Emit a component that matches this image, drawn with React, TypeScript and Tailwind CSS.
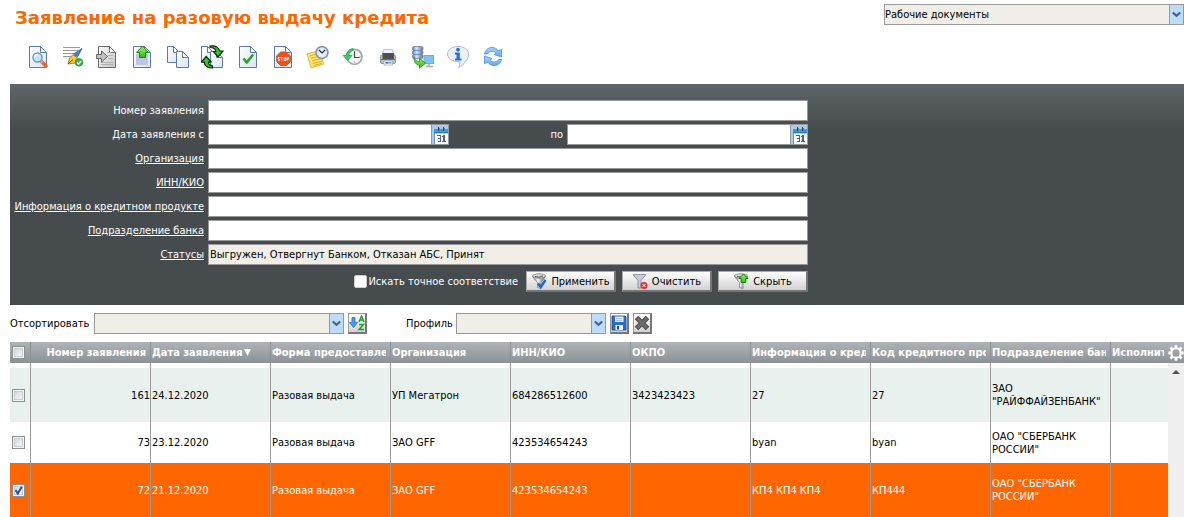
import { useState, type ReactNode } from 'react';

interface Row {
    id: string;
    date: string;
    form: string;
    org: string;
    inn: string;
    okpo: string;
    info: string;
    code: string;
    branch: string;
    height: string;
}

const ROWS: Row[] = [
    { id: '161', date: '24.12.2020', form: 'Разовая выдача', org: 'УП Мегатрон', inn: '684286512600', okpo: '3423423423', info: '27', code: '27', branch: 'ЗАО "РАЙФФАЙЗЕНБАНК"', height: 'h-[54px]' },
    { id: '73', date: '23.12.2020', form: 'Разовая выдача', org: 'ЗАО GFF', inn: '423534654243', okpo: '', info: 'byan', code: 'byan', branch: 'ОАО "СБЕРБАНК РОССИИ"', height: 'h-[41px]' },
    { id: '72', date: '21.12.2020', form: 'Разовая выдача', org: 'ЗАО GFF', inn: '423534654243', okpo: '', info: 'КП4 КП4 КП4', code: 'КП444', branch: 'ОАО "СБЕРБАНК РОССИИ"', height: 'h-[54px]' },
];

const COLUMNS = [
    'Форма предоставления',
    'Организация',
    'ИНН/КИО',
    'ОКПО',
    'Информация о кредитном продукте',
    'Код кредитного продукта',
    'Подразделение банка',
];

/* ---------- icons ---------- */

function Doc({ x = 3, y = 1, w = 18, h = 22, stroke = '#5d79a8', fill = 'url(#paper)' }) {
    return (
        <g stroke={stroke} strokeLinejoin="round">
            <path d={`M${x + 0.5} ${y + 0.5}h${w - 7}l6 6v${h - 7}h-${w - 1}z`} fill={fill} />
            <path d={`M${x + w - 6.5} ${y + 0.5}v6h6z`} fill="#fff" />
        </g>
    );
}

function Gradients() {
    return (
        <svg className="size-0" aria-hidden="true">
            <defs>
                <linearGradient id="paper" x1="0" y1="0" x2="1" y2="1">
                    <stop offset="0" stopColor="#ffffff" />
                    <stop offset="1" stopColor="#d6e6f6" />
                </linearGradient>
                <linearGradient id="greyPaper" x1="0" y1="0" x2="1" y2="1">
                    <stop offset="0" stopColor="#ffffff" />
                    <stop offset="1" stopColor="#c4c4c4" />
                </linearGradient>
                <linearGradient id="green" x1="0" y1="0" x2="0" y2="1">
                    <stop offset="0" stopColor="#9cf05a" />
                    <stop offset="1" stopColor="#35b81c" />
                </linearGradient>
                <linearGradient id="metal" x1="0" y1="0" x2="1" y2="0">
                    <stop offset="0" stopColor="#8b8f92" />
                    <stop offset="0.4" stopColor="#f4f4f4" />
                    <stop offset="1" stopColor="#5e6163" />
                </linearGradient>
                <linearGradient id="sky" x1="0" y1="0" x2="0" y2="1">
                    <stop offset="0" stopColor="#a9d6fb" />
                    <stop offset="1" stopColor="#5fa9ee" />
                </linearGradient>
                <linearGradient id="disc" x1="0" y1="0" x2="1" y2="0">
                    <stop offset="0" stopColor="#4f86d8" />
                    <stop offset="0.4" stopColor="#cfe2fa" />
                    <stop offset="1" stopColor="#5b6f8f" />
                </linearGradient>
                <radialGradient id="face">
                    <stop offset="0" stopColor="#ffffff" />
                    <stop offset="1" stopColor="#cfdcf0" />
                </radialGradient>
            </defs>
        </svg>
    );
}

const TOOLS: { title: string; icon: ReactNode }[] = [
    {
        title: 'Просмотр',
        icon: (
            <>
                <Doc />
                <path d="M15.500 16.500l4.500 4.500" stroke="#e8672c" strokeWidth="3.600" strokeLinecap="round" />
                <path d="M14.500 15.500l2 2" stroke="#d9b49a" strokeWidth="2.400" />
                <circle cx="11.500" cy="12.500" r="4.500" fill="#bfe8fb" stroke="#6f96c6" strokeWidth="1.400" />
                <path d="M8.800 12.500a3 3 0 013-3" stroke="#fff" strokeWidth="1.400" fill="none" />
            </>
        ),
    },
    {
        title: 'Подписать',
        icon: (
            <>
                <path d="M2 2.500h17M2 5.500h15M2 8.500h12M2 11.500h9" stroke="#9a9a9a" />
                <path d="M21 3.500l-4.500 8.500-4-3z" fill="#4c80cc" stroke="#2f579d" strokeWidth="0.800" />
                <path d="M12 9.500l4.500 3.500-2.500 5-7 1 1.500-6z" fill="#f5c945" stroke="#a67d16" strokeWidth="0.900" />
                <path d="M7 19l5-4.500" stroke="#7a5a10" />
                <circle cx="18" cy="17.300" r="3.900" fill="#35b14b" stroke="#1c8a35" strokeWidth="0.600" />
                <path d="M15.900 17.300l1.600 1.700 2.700-3" stroke="#fff" strokeWidth="1.400" fill="none" />
            </>
        ),
    },
    {
        title: 'Импорт',
        icon: (
            <>
                <Doc x={2} stroke="#6a6a6a" fill="url(#greyPaper)" />
                <path d="M11 7.500h4M12 10.500h5M12 13.500h5M5 17.500h12M5 19.500h12" stroke="#b0b0b0" />
                <path d="M0.500 9.500h5v-3.500l6 5.500-6 5.500v-3.500h-5z" fill="#c2c2c2" stroke="#666666" />
            </>
        ),
    },
    {
        title: 'Отправить',
        icon: (
            <>
                <Doc x={2} />
                <path d="M5 9h12v11H5z" fill="#bcc5e4" />
                <path d="M11.500 1l6 6.500h-3v5h-6v-5h-3z" fill="url(#green)" stroke="#0e8a12" />
            </>
        ),
    },
    {
        title: 'Копировать',
        icon: (
            <>
                <Doc x={1} y={1} w={13} h={17} />
                <Doc x={10} y={6} w={13} h={17} />
            </>
        ),
    },
    {
        title: 'Заменить',
        icon: (
            <>
                <Doc x={0} y={1} w={13} h={17} />
                <Doc x={9} y={6} w={13} h={17} />
                <path d="M9 1c6-1 9 2 9.500 5H22l-5 6-4.500-5.500H15C14.500 4 12.500 2.500 9 2.500z" fill="#3fc32b" stroke="#07300a" strokeWidth="1.200" />
                <path d="M0.500 17l4.700-5.500 5 5.500H7.500c0 2.500 1 3.500 4 3.800V23C6 23 3.500 21.500 3.300 17z" fill="#3fc32b" stroke="#07300a" strokeWidth="1.200" />
            </>
        ),
    },
    {
        title: 'Проверить',
        icon: (
            <>
                <Doc />
                <path d="M7.500 13.500l3.200 4 6.500-8" stroke="#2ea12c" strokeWidth="2.600" fill="none" />
            </>
        ),
    },
    {
        title: 'Отозвать',
        icon: (
            <>
                <Doc />
                <path d="M9.600 7h5.800l4 4v5.500l-4 4H9.600l-4-4V11z" fill="#f4501e" stroke="#d83a10" strokeWidth="0.800" />
                <path d="M8.500 12.500H7v1.400h1.400v1.500H7M9.500 12.500h2.500M10.800 12.500v3M13 12.500h1.700v3H13zM16 15.700v-3.200h1.700v1.700H16" stroke="#fff" strokeWidth="0.900" fill="none" />
            </>
        ),
    },
    {
        title: 'Отложить',
        icon: (
            <>
                <path d="M1 9l11-3 6 13-13 4z" fill="#ffe46a" stroke="#e3b840" />
                <path d="M4 11l8-2.300M5 13.500l8-2.300M6 16l9-2.500M7 18.500l9-2.500M8 20.500l8-2.300" stroke="#d3a52c" strokeWidth="0.900" />
                <circle cx="16" cy="7.500" r="6" fill="url(#face)" stroke="#8292ae" strokeWidth="1.600" />
                <path d="M13 5l3 3 3.200-3.200" stroke="#222" strokeWidth="1.200" fill="none" />
            </>
        ),
    },
    {
        title: 'История',
        icon: (
            <>
                <circle cx="13.500" cy="11.800" r="7.500" fill="#f4f4f4" stroke="#a8a8a8" strokeWidth="1.800" />
                <path d="M13.500 6.500v6h5" stroke="#444" strokeWidth="1.200" fill="none" />
                <path d="M13.500 6v1M18.500 12h1M13.500 16.500v1" stroke="#777" />
                <path d="M12 3.500c-4 .5-6.500 3.500-6.800 7H2l4.500 5 4.500-5H8c.3-3 2-4.500 4-5z" fill="#3ccb5e" stroke="#1fa043" strokeWidth="0.700" />
            </>
        ),
    },
    {
        title: 'Печать',
        icon: (
            <>
                <path d="M7.500 4.500h9l1.500 6.500H6z" fill="#eef1f2" stroke="#b2b7b9" strokeWidth="0.800" />
                <rect x="4.500" y="10" width="15" height="8.500" rx="1.500" fill="#babdbf" stroke="#94989a" />
                <path d="M6.500 8h11.500v6H6.500z" fill="#4b5053" />
                <path d="M5 14.500h14" stroke="#6c7072" />
                <path d="M8 16h8.500v4H8z" fill="#fff" stroke="#a2a6a8" strokeWidth="0.700" />
                <path d="M9.500 17.800h3" stroke="#1a57d0" strokeWidth="1.500" />
                <path d="M13 17.800h2.500" stroke="#30a9c8" strokeWidth="1.500" />
            </>
        ),
    },
    {
        title: 'Выгрузить',
        icon: (
            <>
                <rect x="1.500" y="1.500" width="10.500" height="4" rx="1.500" fill="url(#disc)" stroke="#6c83a8" strokeWidth="0.800" />
                <rect x="1.500" y="5.500" width="10.500" height="4" rx="1.500" fill="url(#disc)" stroke="#6c83a8" strokeWidth="0.800" />
                <rect x="1.500" y="9.500" width="10.500" height="4" rx="1.500" fill="url(#disc)" stroke="#6c83a8" strokeWidth="0.800" />
                <rect x="13" y="10.500" width="9.500" height="8" fill="#7cc3f8" stroke="#9aa1a8" />
                <path d="M18 19v2M15 21.500h7" stroke="#a4aab0" strokeWidth="1.500" />
                <path d="M3 12.500c1 3 3 4 5.500 4v-3l6 4.800-6 4.700v-3C5 20 3 17 3 12.500z" fill="url(#green)" stroke="#1f8f2e" strokeWidth="0.900" />
            </>
        ),
    },
    {
        title: 'Информация',
        icon: (
            <>
                <path d="M12 1.500c6 0 10.500 3 10.500 7.500 0 4-1.500 6.500-4 8.200-1 2.800-3 4.600-6 5.300 1.300-1.700 1.500-3.500 1-5.700-7 0-12-3.300-12-7.800 0-4.500 4.500-7.500 10.500-7.500z" fill="#eeeffc" stroke="#b5b9d8" />
                <circle cx="12" cy="4.700" r="1.900" fill="#2173dc" />
                <path d="M9 7.500h4.800v6H15.500V15.500H9v-2h1.500V9.500H9z" fill="#2173dc" />
            </>
        ),
    },
    {
        title: 'Обновить',
        icon: (
            <>
                <path d="M3.500 9C4.500 4.500 7.500 2.500 11 2.500c3 0 5 1.300 6 3.300l3.500-1.300v7.500L13 9.500l2.200-1.500C13 5.300 8.500 5.500 6.500 9z" fill="url(#sky)" stroke="#4a90dc" strokeWidth="0.800" strokeLinejoin="round" />
                <path d="M20.500 14.500c-1 4.300-4 6-7.500 6-3 0-5-1.300-6-3.300L3.500 18.500V11l7.500 2.500L8.800 15c2.200 2.700 6.700 2.500 8.700-.5z" fill="url(#sky)" stroke="#4a90dc" strokeWidth="0.800" strokeLinejoin="round" />
            </>
        ),
    },
];

function Icon({ children }: { children: ReactNode }) {
    return <svg viewBox="0 0 24 24" fill="none" className="size-6" aria-hidden="true">{children}</svg>;
}

function Small({ children }: { children: ReactNode }) {
    return <svg viewBox="0 0 16 16" fill="none" className="size-4 shrink-0" aria-hidden="true">{children}</svg>;
}

function Funnel() {
    return (
        <>
            <path d="M1.500 3.500l5 6v5l3.500 1v-6l4.500-6z" fill="url(#metal)" stroke="#6a6e70" strokeWidth="0.700" />
            <ellipse cx="8" cy="3" rx="6.500" ry="2.200" fill="#d8dadb" stroke="#7b7f82" strokeWidth="0.800" />
            <path d="M4 3.500q4 1.500 8-.5" stroke="#54585a" />
        </>
    );
}

function Calendar() {
    return (
        <svg viewBox="0 0 16 19" shapeRendering="crispEdges" className="h-[19px] w-4" aria-hidden="true">
            <path d="M0 0h16v19H0z" fill="#a6cbf3" />
            <path d="M2 4h14v4H2z" fill="#3f9cc8" />
            <path d="M2 7h14v1H2z" fill="#1f7fc4" />
            <path d="M3 9h13v10H3z" fill="#fff" />
            <path d="M2 8h1v11H2z" fill="#7a8fb4" />
            <path d="M6 2h1v4H6zM11 2h1v4h-1z" fill="#4b3358" />
            <path d="M7 3h1v2H7zM12 3h1v2h-1z" fill="#5f8a78" />
            <path d="M5 10h4v7H6v-1h2v-2H6v-1h2v-2H5zM11 10h2v6h1v1h-4v-1h1v-4h-1v-1h1z" fill="#56607c" />
        </svg>
    );
}

/* ---------- controls ---------- */

function Dropdown({ label, id, value, className }: { label: string; id: string; value: string; className: string }) {
    return (
        <div className={`flex h-[21px] border border-[#999999] bg-[#f1eee7] ${className}`}>
            <select id={id} aria-label={label} className="min-w-0 flex-1 appearance-none bg-transparent outline-none">
                <option>{value}</option>
            </select>
            <span className="flex w-[14px] items-center justify-center border-l border-[#999999] bg-[#bbdcfb]">
                <svg viewBox="0 0 9 7" className="h-[7px] w-[9px]" fill="none" aria-hidden="true">
                    <path d="M0.800 1.500l3.700 3.300 3.700-3.300" stroke="#44618c" strokeWidth="2.200" />
                </svg>
            </span>
        </div>
    );
}

function Check({ label, defaultChecked = false }: { label: string; defaultChecked?: boolean }) {
    return (
        <span className="grid size-[13px]">
            <input
                type="checkbox"
                aria-label={label}
                defaultChecked={defaultChecked}
                className="peer col-start-1 row-start-1 size-[13px] appearance-none border border-[#8e8f8f] bg-linear-to-br from-[#cbcfd5] to-white shadow-[inset_0_0_0_1px_#f4f4f4,inset_0_0_0_2px_#c9ccd0]"
            />
            <svg viewBox="0 0 13 13" fill="none" className="pointer-events-none invisible col-start-1 row-start-1 size-[13px] peer-checked:visible" aria-hidden="true">
                <path d="M3.500 6l2.300 3.500L9.800 2.800" stroke="#2f4f96" strokeWidth="2" />
            </svg>
        </span>
    );
}

function Field({ label, id, plain = false, value = '' }: { label: string; id: string; plain?: boolean; value?: string }) {
    return (
        <>
            <label htmlFor={id} className="text-right">
                {plain ? label : <a href="#" className="underline">{label}</a>}
            </label>
            <input
                id={id}
                defaultValue={value}
                readOnly={value !== ''}
                className="h-[21px] w-full border border-[#999999] bg-white px-px text-black outline-none read-only:bg-[#f1eee7]"
            />
        </>
    );
}

function DateInput({ id }: { id: string }) {
    return (
        <div className="flex h-[21px] w-[241px] border border-[#999999] bg-white">
            <input id={id} className="min-w-0 flex-1 px-px text-black outline-none" />
            <button type="button" aria-label="Календарь" className="w-[17px] border-l border-[#999999]"><Calendar /></button>
        </div>
    );
}

function FilterButton({ icon, children }: { icon: ReactNode; children: string }) {
    return (
        <button
            type="button"
            className="flex h-[21px] w-[90px] items-center justify-center gap-1 border border-r-2 border-b-2 border-[#aaaaaa] border-r-[#777777] border-b-[#777777] bg-linear-to-b from-white to-[#d2d2d2] text-black"
        >
            <Small>{icon}</Small>
            {children}
        </button>
    );
}

function SquareButton({ label, children }: { label: string; children: ReactNode }) {
    return (
        <button type="button" aria-label={label} className="flex h-[21px] w-[19px] items-center justify-center border border-r-2 border-b-2 border-[#999999] border-r-[#777777] border-b-[#777777] bg-linear-to-b from-white to-[#d2d2d2]">
            <Small>{children}</Small>
        </button>
    );
}

function FilterPanel() {
    return (
        <form className="bg-[#464b4e] bg-linear-to-b from-[#5f6568] to-[#464b4e] to-[45px] pt-4 pb-[13px] text-white">
            <div className="grid max-w-[798px] grid-cols-[194px_1fr] items-center gap-x-1 gap-y-[3px]">
                <Field id="num" label="Номер заявления" plain />
                <label htmlFor="from" className="text-right">Дата заявления с</label>
                <div className="flex items-center justify-between">
                    <DateInput id="from" />
                    <div className="flex items-center gap-1">
                        <label htmlFor="to">по</label>
                        <DateInput id="to" />
                    </div>
                </div>
                <Field id="org" label="Организация" />
                <Field id="inn" label="ИНН/КИО" />
                <Field id="info" label="Информация о кредитном продукте" />
                <Field id="branch" label="Подразделение банка" />
                <Field id="status" label="Статусы" value="Выгружен, Отвергнут Банком, Отказан АБС, Принят" />
            </div>
            <div className="mt-1.5 flex max-w-[798px] items-center justify-end gap-1.5">
                <label className="mr-0.5 flex items-center gap-px">
                    <input type="checkbox" className="size-[13px] appearance-none rounded-xs border border-[#cccccc] bg-white checked:bg-[#2f4f96]" />
                    Искать точное соответствие
                </label>
                <FilterButton icon={<><Funnel /><path d="M7 10.500l2.800 3.500 4.700-7" stroke="#1d62c9" strokeWidth="2.400" /></>}>Применить</FilterButton>
                <FilterButton
                    icon={
                        <>
                            <path d="M1 1.500h13l-5 6v7.500H6V7.500z" fill="#c9cbd6" stroke="#8a8c98" strokeWidth="0.900" />
                            <circle cx="12" cy="12.500" r="3.500" fill="#e03038" />
                            <path d="M10.600 11.100l2.800 2.800M13.400 11.100l-2.800 2.800" stroke="#fff" />
                        </>
                    }
                >
                    Очистить
                </FilterButton>
                <FilterButton icon={<><Funnel /><path d="M10.500 1l4.500 4.500h-2.200v4H8.200v-4H6z" fill="url(#green)" stroke="#0c7d12" /></>}>Скрыть</FilterButton>
            </div>
        </form>
    );
}

function SortBar() {
    return (
        <div className="mt-2 flex items-center gap-1">
            <label htmlFor="sort" className="w-20">Отсортировать</label>
            <Dropdown id="sort" label="Отсортировать" value="" className="w-[250px]" />
            <SquareButton label="Сортировка">
                <path d="M3 2.500h3v5h2.500L4.500 12.500.500 7.500H3z" fill="#4a9af0" stroke="#2a6fc4" strokeWidth="0.800" />
                <path d="M10 7l2.500-6L15 7M10.800 5h3.400M10 9.500h4.500L10 14.500h5" stroke="#23a32b" strokeWidth="1.500" />
            </SquareButton>
            <label htmlFor="profile" className="ml-[35px] w-[46px]">Профиль</label>
            <Dropdown id="profile" label="Профиль" value="" className="w-[150px]" />
            <SquareButton label="Сохранить">
                <path d="M1 1h13l1 1v13H1z" fill="#2b6dcb" stroke="#164a9c" strokeWidth="0.800" />
                <path d="M4 1.500h8.500v5.500H4z" fill="#e8f1fb" />
                <path d="M5 3.500h6.500M5 5.500h6.500" stroke="#9ab9e0" strokeWidth="0.800" />
                <path d="M4.500 10h7.500v5H4.500z" fill="#f5f5f5" />
                <path d="M6 11h2v3.500H6z" fill="#164a9c" />
            </SquareButton>
            <SquareButton label="Удалить">
                <path d="M2.500 2.500l11 11M13.500 2.500l-11 11" stroke="#4c4c4c" strokeWidth="5" />
                <path d="M3 3l10 10M13 3L3 13" stroke="#6c6c6c" strokeWidth="3" />
            </SquareButton>
        </div>
    );
}

function DataTable() {
    const [selected] = useState('72');
    const head = 'overflow-hidden border-r border-[#8d9194] p-0 pl-px pr-1 whitespace-nowrap';
    const cell = 'border-r border-[#999999] p-0 pl-px';

    return (
        <table className="mt-2 w-full table-fixed border-separate border-spacing-0 text-left">
            <colgroup>
                <col className="w-[21px]" />
                <col className="w-[120px]" />
                <col className="w-[120px]" />
                {COLUMNS.map((c) => <col key={c} className="w-[120px]" />)}
                <col />
                <col className="w-4" />
            </colgroup>
            <thead>
                <tr className="h-[21px] bg-linear-to-b from-[#aeb3b7] to-[#8d9295] font-bold text-white">
                    <th className="border-r border-[#8d9194] p-0 pl-0.5"><Check label="Выбрать все" /></th>
                    <th className={`${head} text-right`}>Номер заявления</th>
                    <th className={head}>
                        <span className="flex items-center gap-0.5">
                            Дата заявления
                            <svg viewBox="0 0 7 7" className="size-[7px] shrink-0" aria-hidden="true"><path d="M0 0h7L3.500 7z" fill="#fff" /></svg>
                        </span>
                    </th>
                    {COLUMNS.map((c) => <th key={c} className={head}><div className="overflow-hidden">{c}</div></th>)}
                    <th className="p-0 pl-px pr-1 whitespace-nowrap"><div className="overflow-hidden">Исполнитель</div></th>
                    <th className="p-0">
                        <button type="button" aria-label="Настройки" className="block">
                            <svg viewBox="0 0 16 16" fill="none" stroke="#fff" className="size-4" aria-hidden="true">
                                <circle cx="8" cy="8" r="4.700" strokeWidth="2" />
                                <path d="M8 .3v2.700M8 13v2.700M.3 8h2.700M13 8h2.700M2.400 2.400l2 2M11.600 11.600l2 2M2.400 13.600l2-2M11.600 4.400l2-2" strokeWidth="2.800" />
                            </svg>
                        </button>
                    </th>
                </tr>
            </thead>
            <tbody>
                <tr className="h-[5px]">
                    {Array.from({ length: 10 }, (_, i) => <td key={i} className="border-r border-[#999999] p-0" />)}
                    <td className="p-0" />
                    <td rowSpan={4} className="bg-[#f0f0f0] p-0 align-top">
                        <svg viewBox="0 0 16 16" className="size-4" aria-hidden="true"><path d="M4 11l4-4 4 4z" fill="#505050" /></svg>
                    </td>
                </tr>
                {ROWS.map((r, i) => (
                    <tr key={r.id} className={`${r.height} ${r.id === selected ? 'bg-[#ff6600] text-white' : i % 2 === 0 ? 'bg-[#e8f1ee]' : 'bg-white'}`}>
                        <td className="border-r border-[#999999] p-0 pl-0.5"><Check label={`Выбрать ${r.id}`} defaultChecked={r.id === selected} /></td>
                        <td className={`${cell} text-right`}>{r.id}</td>
                        <td className={cell}>{r.date}</td>
                        <td className={cell}>{r.form}</td>
                        <td className={cell}>{r.org}</td>
                        <td className={cell}>{r.inn}</td>
                        <td className={cell}>{r.okpo}</td>
                        <td className={cell}>{r.info}</td>
                        <td className={cell}>{r.code}</td>
                        <td className={cell}>{r.branch}</td>
                        <td className="p-0" />
                    </tr>
                ))}
            </tbody>
        </table>
    );
}

export default function App() {
    return (
        <main className="bg-white pl-2.5 font-['DejaVu_Sans_Condensed','DejaVu_Sans',sans-serif] text-[11px] leading-[13px] text-black">
            <Gradients />
            <header className="flex items-start justify-between pt-1">
                <h1 className="pt-0.5 pl-[5px] font-['DejaVu_Sans',sans-serif] text-[18px] leading-6 font-bold text-[#ff6600]">Заявление на разовую выдачу кредита</h1>
                <Dropdown id="folder" label="Папка" value="Рабочие документы" className="w-[300px]" />
            </header>
            <nav className="mt-[15px] mb-[15px] flex gap-[11px] pl-4">
                {TOOLS.map((t) => (
                    <button key={t.title} type="button" title={t.title} aria-label={t.title}><Icon>{t.icon}</Icon></button>
                ))}
            </nav>
            <FilterPanel />
            <SortBar />
            <DataTable />
        </main>
    );
}
